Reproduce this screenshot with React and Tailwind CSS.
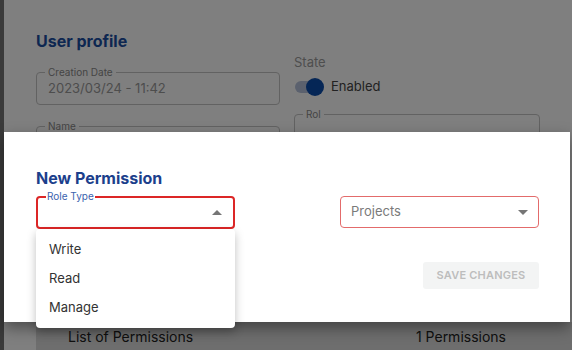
import React from "react";

function Field({ label, value, className = "" }) {
  return (
    <div className={"relative h-[33px] rounded-[4px] border border-[#c4c4c4] " + className}>
      <span className="absolute left-[8px] top-[-7px] bg-white px-[3px] text-[10px] leading-[12px] text-[#8a8a8a]">{label}</span>
      {value && <div className="pl-[11px] pt-[7px] text-[13px] leading-[17px] text-[#9a9a9a]">{value}</div>}
    </div>
  );
}

function Caret({ up }) {
  return (
    <svg width="10" height="5" viewBox="0 0 10 5" className="shrink-0">
      {up ? <path d="M0 5 L5 0 L10 5 Z" fill="#757575" /> : <path d="M0 0 L5 5 L10 0 Z" fill="#757575" />}
    </svg>
  );
}

export default function App() {
  return (
    <div className="relative h-[350px] w-[572px] overflow-hidden bg-white font-['Inter',sans-serif]">
      {/* background page */}
      <div className="flex h-full">
        <div className="w-[4px] bg-[#757575]" />
        <div className="flex flex-1 flex-col bg-white pl-[32px] pt-[31px]">
          <div className="text-[16px] font-bold leading-[20px] text-[#1b4fa3]">User profile</div>
          <div className="mt-[3px] grid grid-cols-[244px_246px] gap-x-[14px]">
            <div className="flex flex-col">
              <Field label="Creation Date" value="2023/03/24 - 11:42" className="mt-[18px]" />
              <Field label="Name" className="mt-[21px]" />
            </div>
            <div className="flex flex-col">
              <div className="text-[13px] leading-[17px] text-[#9c9c9c]">State</div>
              <div className="mt-[7px] flex items-center gap-[7px]">
                <div className="relative h-[14px] w-[30px]">
                  <div className="absolute left-[1px] top-[1px] h-[12px] w-[26px] rounded-full bg-[#b6c3dc]" />
                  <div className="absolute right-0 top-[-2px] h-[18px] w-[18px] rounded-full bg-[#0b4cac]" />
                </div>
                <span className="text-[13px] leading-[17px] text-[#444]">Enabled</span>
              </div>
              <Field label="Rol" className="mt-[19px]" />
            </div>
          </div>
          <div className="mt-auto flex h-[28px] items-center bg-[#dcdcdc] pl-[32px] pr-[66px] text-[14px] text-[#222]">
            <span>List of Permissions</span>
            <span className="ml-auto">1 Permissions</span>
          </div>
        </div>
      </div>

      {/* backdrop */}
      <div className="absolute inset-0 bg-black/50" />

      {/* modal */}
      <div className="absolute left-[4px] top-[132px] h-[190px] w-[566px] bg-white pl-[32px] pr-[31px] pt-[36px] shadow-[0_6px_14px_rgba(0,0,0,0.4)]">
        <div className="text-[16px] font-bold leading-[20px] text-[#1c3f8c]">New Permission</div>
        <div className="mt-[8px] flex justify-between">
          <div className="relative flex h-[33px] w-[199px] items-center justify-end rounded-[4px] border-2 border-[#dc2626] pr-[11px]">
            <span className="absolute left-[8px] top-[-8px] bg-white px-[1px] text-[10px] leading-[12px] text-[#3b63ae]">Role Type</span>
            <Caret up />
          </div>
          <div className="flex h-[32px] w-[199px] items-center justify-between rounded-[4px] border border-[#e36b6b] pl-[10px] pr-[10px]">
            <span className="text-[13px] text-[#7a7a7a]">Projects</span>
            <Caret />
          </div>
        </div>
        <div className="mt-[33px] flex justify-end">
          <div className="flex h-[27px] w-[116px] items-center justify-center rounded-[3px] bg-[#f3f4f4] text-[11px] font-semibold tracking-[0.2px] text-[#bdbdbd]">SAVE CHANGES</div>
        </div>
      </div>

      {/* dropdown menu */}
      <div className="absolute left-[36px] top-[229px] w-[199px] rounded-[4px] bg-white py-[6px] shadow-[0_4px_10px_rgba(0,0,0,0.25)]">
        {["Write", "Read", "Manage"].map((t) => (
          <div key={t} className="flex h-[29px] items-center pl-[13px] text-[13px] text-[#333]">{t}</div>
        ))}
      </div>
    </div>
  );
}
